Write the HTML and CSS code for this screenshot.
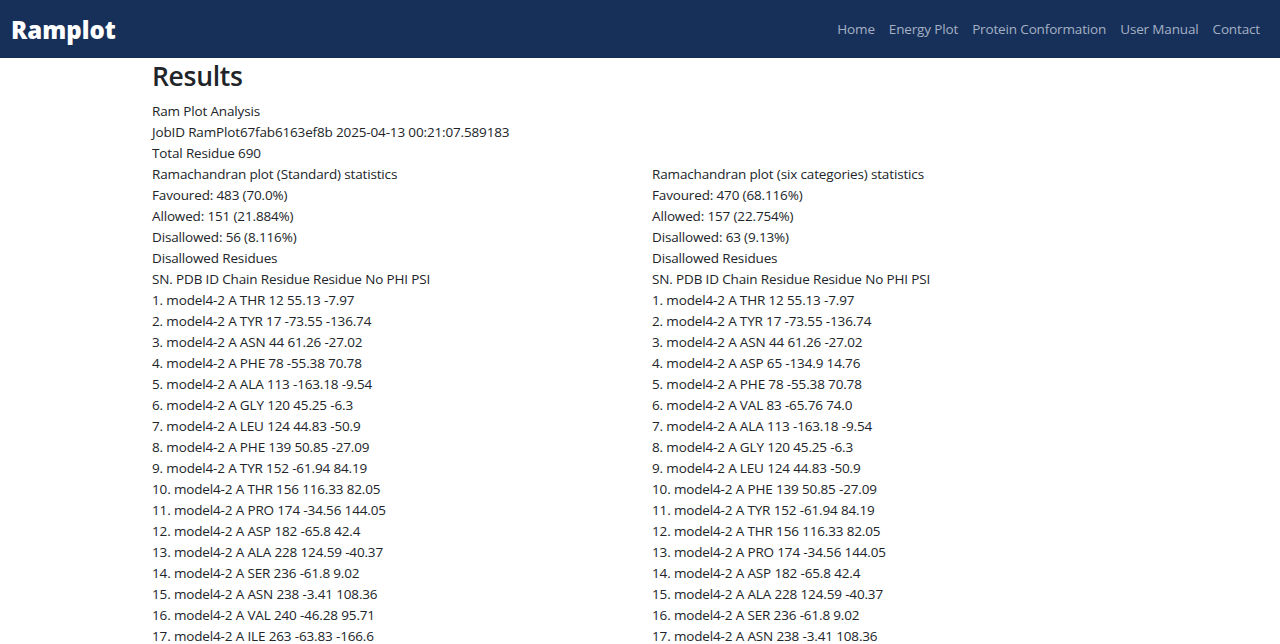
FILE: index.html
```html
<!DOCTYPE html>
<html lang="en">
<head>
<meta charset="utf-8">
<title>Ramplot - Results</title>
<link rel="stylesheet" href="styles.css">
</head>
<body>
<nav class="navbar">
  <a class="brand" href="#">Ramplot</a>
  <ul class="nav-links">
    <li><a href="#">Home</a></li>
    <li><a href="#">Energy Plot</a></li>
    <li><a href="#">Protein Conformation</a></li>
    <li><a href="#">User Manual</a></li>
    <li><a href="#">Contact</a></li>
  </ul>
</nav>
<main class="container">
  <h2 class="title">Results</h2>
  <p>Ram Plot Analysis</p>
  <p>JobID RamPlot67fab6163ef8b 2025-04-13 00:21:07.589183</p>
  <p>Total Residue 690</p>
  <div class="cols">
    <section class="col">
      <p>Ramachandran plot (Standard) statistics</p>
      <p>Favoured: 483 (70.0%)</p>
      <p>Allowed: 151 (21.884%)</p>
      <p>Disallowed: 56 (8.116%)</p>
      <p>Disallowed Residues</p>
      <p>SN. PDB ID Chain Residue Residue No PHI PSI</p>
      <p>1. model4-2 A THR 12 55.13 -7.97</p>
      <p>2. model4-2 A TYR 17 -73.55 -136.74</p>
      <p>3. model4-2 A ASN 44 61.26 -27.02</p>
      <p>4. model4-2 A PHE 78 -55.38 70.78</p>
      <p>5. model4-2 A ALA 113 -163.18 -9.54</p>
      <p>6. model4-2 A GLY 120 45.25 -6.3</p>
      <p>7. model4-2 A LEU 124 44.83 -50.9</p>
      <p>8. model4-2 A PHE 139 50.85 -27.09</p>
      <p>9. model4-2 A TYR 152 -61.94 84.19</p>
      <p>10. model4-2 A THR 156 116.33 82.05</p>
      <p>11. model4-2 A PRO 174 -34.56 144.05</p>
      <p>12. model4-2 A ASP 182 -65.8 42.4</p>
      <p>13. model4-2 A ALA 228 124.59 -40.37</p>
      <p>14. model4-2 A SER 236 -61.8 9.02</p>
      <p>15. model4-2 A ASN 238 -3.41 108.36</p>
      <p>16. model4-2 A VAL 240 -46.28 95.71</p>
      <p>17. model4-2 A ILE 263 -63.83 -166.6</p>
    </section>
    <section class="col">
      <p>Ramachandran plot (six categories) statistics</p>
      <p>Favoured: 470 (68.116%)</p>
      <p>Allowed: 157 (22.754%)</p>
      <p>Disallowed: 63 (9.13%)</p>
      <p>Disallowed Residues</p>
      <p>SN. PDB ID Chain Residue Residue No PHI PSI</p>
      <p>1. model4-2 A THR 12 55.13 -7.97</p>
      <p>2. model4-2 A TYR 17 -73.55 -136.74</p>
      <p>3. model4-2 A ASN 44 61.26 -27.02</p>
      <p>4. model4-2 A ASP 65 -134.9 14.76</p>
      <p>5. model4-2 A PHE 78 -55.38 70.78</p>
      <p>6. model4-2 A VAL 83 -65.76 74.0</p>
      <p>7. model4-2 A ALA 113 -163.18 -9.54</p>
      <p>8. model4-2 A GLY 120 45.25 -6.3</p>
      <p>9. model4-2 A LEU 124 44.83 -50.9</p>
      <p>10. model4-2 A PHE 139 50.85 -27.09</p>
      <p>11. model4-2 A TYR 152 -61.94 84.19</p>
      <p>12. model4-2 A THR 156 116.33 82.05</p>
      <p>13. model4-2 A PRO 174 -34.56 144.05</p>
      <p>14. model4-2 A ASP 182 -65.8 42.4</p>
      <p>15. model4-2 A ALA 228 124.59 -40.37</p>
      <p>16. model4-2 A SER 236 -61.8 9.02</p>
      <p>17. model4-2 A ASN 238 -3.41 108.36</p>
    </section>
  </div>
</main>
</body>
</html>
```

FILE: styles.css
```css
* { box-sizing: border-box; }
html, body {
  margin: 0;
  padding: 0;
  background: #ffffff;
  color: #212529;
  font-family: "Open Sans", "Noto Sans", "DejaVu Sans", sans-serif;
  font-size: 13.5px;
  letter-spacing: -0.15px;
  line-height: 21px;
}
.navbar {
  height: 58px;
  background: #17305a;
  display: flex;
  align-items: center;
  justify-content: space-between;
  padding: 0 20px 0 11px;
}
.brand {
  color: #ffffff;
  text-decoration: none;
  font-family: "Open Sans", sans-serif;
  font-weight: 800;
  font-size: 24px;
  letter-spacing: 0;
  line-height: 30px;
  margin-top: 2px;
}
.nav-links {
  list-style: none;
  margin: 0;
  padding: 0;
  display: flex;
  gap: 14px;
}
.nav-links a {
  color: #a5b0c3;
  text-decoration: none;
  font-size: 13.5px;
}
.container {
  max-width: 1000px;
  margin: 0 auto;
  padding: 0 12px;
}
.title {
  margin: 0 0 9px;
  padding-top: 3px;
  font-size: 26.5px;
  line-height: 31px;
  font-weight: 600;
  letter-spacing: -0.3px;
}
p { margin: 0; }
.cols {
  display: grid;
  grid-template-columns: 1fr 1fr;
  column-gap: 24px;
}
```
